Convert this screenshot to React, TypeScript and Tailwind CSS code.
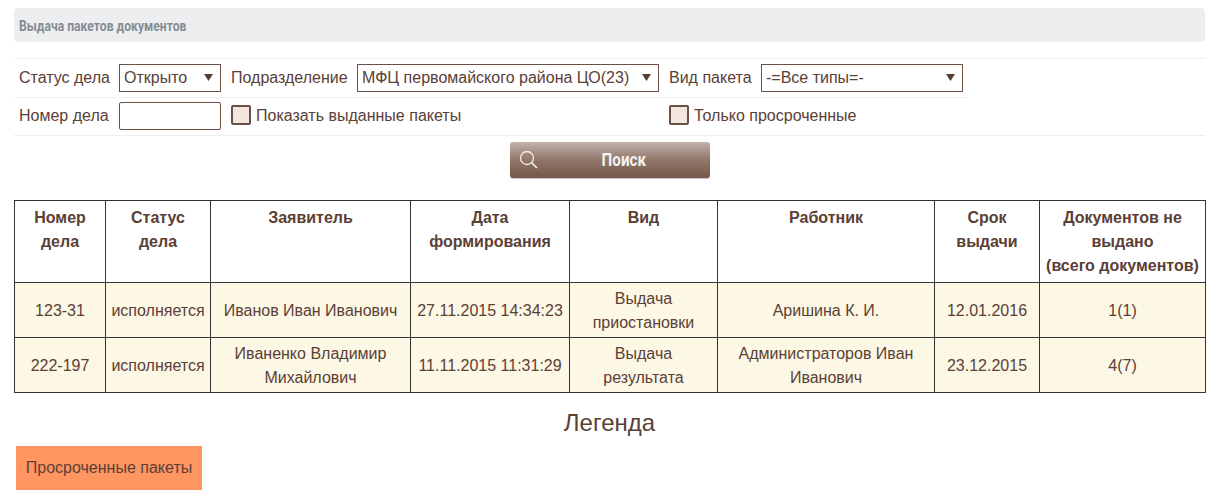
const headers = [
  { title: <>Номер<br />дела</>, width: "w-[91px]" },
  { title: <>Статус<br />дела</>, width: "w-[105px]" },
  { title: "Заявитель", width: "w-[200px]" },
  { title: <>Дата<br />формирования</>, width: "w-[159px]" },
  { title: "Вид", width: "w-[148px]" },
  { title: "Работник", width: "w-[217px]" },
  { title: <>Срок<br />выдачи</>, width: "w-[105px]" },
  { title: <>Документов не<br />выдано<br />(всего документов)</>, width: "w-[166px]" },
];

const rows = [
  ["123-31", "исполняется", "Иванов Иван Иванович", "27.11.2015 14:34:23", "Выдача приостановки", "Аришина К. И.", "12.01.2016", "1(1)"],
  ["222-197", "исполняется", "Иваненко Владимир Михайлович", "11.11.2015 11:31:29", "Выдача результата", "Администраторов Иван Иванович", "23.12.2015", "4(7)"],
];

function Arrow() {
  return (
    <svg width="9" height="7" viewBox="0 0 9 7" className="absolute right-[7px] top-[9px]">
      <path d="M0 0h9L4.5 7z" fill="#5a3d32" />
    </svg>
  );
}

function FakeSelect({ value, width }: { value: string; width: string }) {
  return (
    <div className={`relative h-[28px] ${width} shrink-0 border border-[#6b5045] bg-white pl-[4px] leading-[25px] whitespace-nowrap`}>
      {value}
      <Arrow />
    </div>
  );
}

function CheckLabel({ label, width }: { label: string; width: string }) {
  return (
    <label className={`flex items-center ${width}`}>
      <span className="h-[20px] w-[20px] rounded-[2px] border-2 border-[#6b5045] bg-[#f3e6de]" />
      <span className="ml-[5px] pt-[2px]">{label}</span>
    </label>
  );
}

export default function App() {
  return (
    <div className="h-[498px] overflow-hidden bg-white px-[14px] pt-[8px] font-['Liberation_Sans',Arial,sans-serif] text-[16px] text-[#5b4036]">
      <div className="flex h-[34px] items-center rounded-[4px] bg-[#eceef0] pl-[5px]">
        <h1 className="origin-left scale-x-[0.81] pt-[2px] font-['Roboto',sans-serif] text-[15px] font-bold whitespace-nowrap text-[#848c93]">
          Выдача пакетов документов
        </h1>
      </div>

      <div className="mt-[16px] border-t border-[#eeeeee]">
        <div className="flex h-[39px] w-[954px] items-start border-b border-[#eeeeee] pt-[5px]">
          <span className="w-[105px] pl-[5px] leading-[27px]">Статус дела</span>
          <FakeSelect value="Открыто" width="w-[102px]" />
          <span className="ml-[10px] w-[126px] leading-[27px]">Подразделение</span>
          <FakeSelect value="МФЦ первомайского района ЦО(23)" width="w-[302px]" />
          <span className="ml-[10px] w-[92px] leading-[27px]">Вид пакета</span>
          <FakeSelect value="-=Все типы=-" width="w-[202px]" />
        </div>
        <div className="flex h-[38px] items-start border-b border-[#eeeeee] pt-[4px]">
          <span className="w-[105px] pl-[5px] leading-[28px]">Номер дела</span>
          <input className="h-[28px] w-[102px] rounded-[2px] border border-[#6b5045] bg-white" />
          <div className="ml-[10px] flex h-[26px] items-center">
            <CheckLabel label="Показать выданные пакеты" width="w-[438px]" />
            <CheckLabel label="Только просроченные" width="w-[300px]" />
          </div>
        </div>
      </div>

      <div className="mt-[6px] flex justify-center">
        <button className="relative h-[36px] w-[200px] rounded-[3px] bg-gradient-to-b from-[#c2b4ad] via-[#92766a] to-[#76574a] pl-[28px] shadow-[0_1px_1px_rgba(0,0,0,0.25)]">
          <svg width="20" height="20" viewBox="0 0 20 20" fill="none" stroke="#f3eeea" className="absolute left-[9px] top-[8px]">
            <circle cx="8" cy="8" r="6.5" strokeWidth="1.3" />
            <path d="M12.6 12.6l5.4 5.4" strokeWidth="1.6" />
          </svg>
          <span className="inline-block scale-x-[0.8] font-['Roboto',sans-serif] text-[19px] font-bold text-[#f6f1ee]">Поиск</span>
        </button>
      </div>

      <table className="mt-[22px] w-[1191px] table-fixed border-collapse border border-[#333333] leading-[24px]">
        <thead>
          <tr className="h-[82px]">
            {headers.map((h, i) => (
              <th key={i} className={`${h.width} border border-[#333333] px-0 pt-[5px] align-top font-bold`}>
                {h.title}
              </th>
            ))}
          </tr>
        </thead>
        <tbody>
          {rows.map((row) => (
            <tr key={row[0]} className="h-[55px] bg-[#fdf7e5]">
              {row.map((cell, i) => (
                <td key={i} className="border border-[#333333] px-[4px] pt-[2px] text-center align-middle">
                  {cell}
                </td>
              ))}
            </tr>
          ))}
        </tbody>
      </table>

      <h2 className="mt-[14px] text-center text-[24px] leading-[32px]">Легенда</h2>

      <div className="mt-[7px] ml-[2px] flex h-[44px] w-[186px] items-center justify-center bg-[#ff9560]">
        Просроченные пакеты
      </div>
    </div>
  );
}
